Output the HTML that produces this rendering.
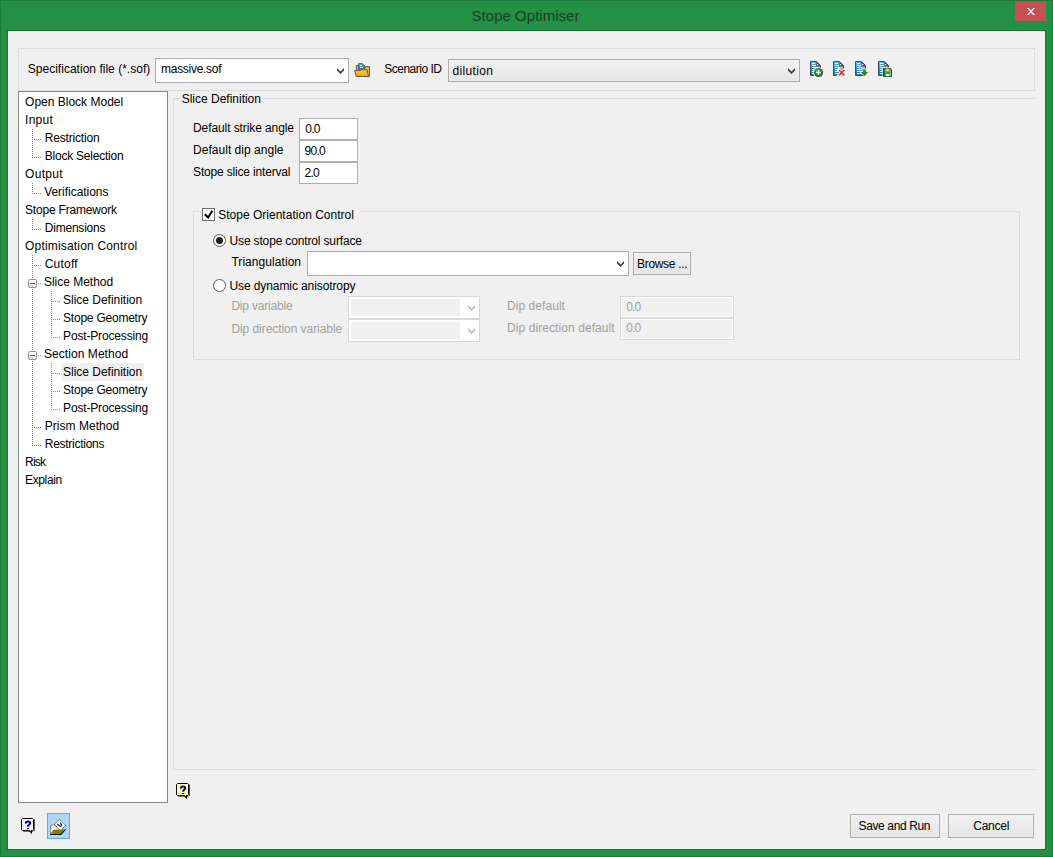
<!DOCTYPE html>
<html><head><meta charset="utf-8"><title>Stope Optimiser</title>
<style>
html,body{margin:0;padding:0;}
body{width:1053px;height:857px;overflow:hidden;position:relative;background:#239044;font-family:"Liberation Sans",sans-serif;font-size:12px;}
div,span,svg{position:absolute;box-sizing:border-box;}
.t{white-space:nowrap;display:block;}
#frame{left:0;top:0;width:1053px;height:857px;border:1px solid #1c7a38;background:#239044;}
#client{left:8px;top:31px;width:1037px;height:818px;background:#f0f0f0;box-shadow:0 0 0 1px #107a30;}
#close{left:1015px;top:1px;width:31px;height:20px;background:#c75050;}
.gb{border:1px solid #dcdcdc;}
.edit{border:1px solid #abadb3;background:#fff;}
.btn{border:1px solid #acacac;background:linear-gradient(#f1f1f1,#e5e5e5);box-shadow:inset 0 0 0 1px rgba(255,255,255,.28);}
.dis{border:1px solid #d9d9d9;background:#fff;}
.dis i{position:absolute;display:block;background:#f0f0f0;}
.hl{background:#f0f0f0;}

</style></head><body>
<div id="frame"></div>
<div id="close"><svg width="31" height="20" viewBox="0 0 31 20" style="left:0;top:0"><path transform="translate(12,7)" d="M0 0 h1.8 l2.2 2.5 l2.2 -2.5 h1.8 l-3.1 3.5 l3.1 3.5 h-1.8 l-2.2 -2.5 l-2.2 2.5 h-1.8 l3.1 -3.5 z" fill="#fff"/></svg></div>
<div id="client"></div>
<!-- top group -->
<div class="gb" style="left:18px;top:48px;width:1017px;height:43px"></div>
<div class="edit" style="left:155px;top:58px;width:194px;height:25px"></div>
<div class="btn" style="left:448px;top:59px;width:352px;height:23px"></div>
<!-- tree -->
<div class="edit" style="left:18px;top:91px;width:150px;height:712px;border-color:#828790"></div>
<div class="hl" style="left:61px;top:363px;width:83px;height:18px"></div>
<!-- right group -->
<div class="gb" style="left:173px;top:98px;width:862px;height:672px;border-right:none"></div>
<div style="left:180px;top:96px;width:83px;height:5px;background:#f0f0f0"></div>
<div class="edit" style="left:299px;top:118px;width:59px;height:22px"></div>
<div class="edit" style="left:299px;top:140px;width:59px;height:22px"></div>
<div class="edit" style="left:299px;top:162px;width:59px;height:22px"></div>
<div class="gb" style="left:193px;top:211px;width:827px;height:149px"></div>
<div style="left:201px;top:209px;width:159px;height:5px;background:#f0f0f0"></div>
<div style="left:202px;top:208px;width:13px;height:13px;border:1px solid #707070;background:#fff"></div>
<svg style="left:202px;top:208px" width="13" height="13" viewBox="0 0 13 13"><path d="M2.8 6.3 L6.1 9.5 L10.4 2.7" stroke="#000" stroke-width="2" fill="none"/></svg>
<div style="left:213px;top:234px;width:13px;height:13px;border:1px solid #5a5a5a;background:#fff;border-radius:50%"></div>
<div style="left:216px;top:237px;width:7px;height:7px;background:#222;border-radius:50%"></div>
<div class="edit" style="left:307px;top:251px;width:322px;height:25px"></div>
<div class="btn" style="left:633px;top:252px;width:58px;height:23px"></div>
<div style="left:213px;top:279px;width:13px;height:13px;border:1px solid #5a5a5a;background:#fff;border-radius:50%"></div>
<div class="dis" style="left:348px;top:296px;width:132px;height:23px"><i style="left:2px;top:2px;width:109px;height:17px"></i></div>
<div class="dis" style="left:348px;top:319px;width:132px;height:23px"><i style="left:2px;top:2px;width:109px;height:17px"></i></div>
<div class="dis" style="left:620px;top:296px;width:114px;height:22px"><i style="left:1px;top:1px;width:110px;height:18px"></i></div>
<div class="dis" style="left:620px;top:318px;width:114px;height:22px"><i style="left:1px;top:1px;width:110px;height:18px"></i></div>
<!-- bottom -->
<div style="left:47px;top:813px;width:23px;height:26px;border:1px solid #66a7e8;background:#b3d5f3"></div>
<div class="btn" style="left:850px;top:814px;width:90px;height:24px"></div>
<div class="btn" style="left:948px;top:814px;width:86px;height:24px"></div>
<svg id="ov" width="1053" height="857" viewBox="0 0 1053 857" style="left:0;top:0">
<defs>
<linearGradient id="gdoc" x1="0" y1="0" x2="0" y2="1"><stop offset="0" stop-color="#6db3df"/><stop offset="1" stop-color="#0f72b2"/></linearGradient>
<linearGradient id="gfold" x1="0" y1="0" x2="0" y2="1"><stop offset="0" stop-color="#ffd91c"/><stop offset="1" stop-color="#ff9619"/></linearGradient>
<linearGradient id="gback" x1="0" y1="0" x2="0" y2="1"><stop offset="0" stop-color="#e9b51c"/><stop offset="1" stop-color="#ffc21d"/></linearGradient>
<radialGradient id="gplus" cx="0.4" cy="0.3" r="0.8"><stop offset="0" stop-color="#4aa84a"/><stop offset="1" stop-color="#0b5a18"/></radialGradient>
<linearGradient id="garr" x1="0" y1="0" x2="0" y2="1"><stop offset="0" stop-color="#3fa03a"/><stop offset="1" stop-color="#126a1c"/></linearGradient>
<linearGradient id="gexp" x1="0" y1="0" x2="0" y2="1"><stop offset="0" stop-color="#ffffff"/><stop offset="1" stop-color="#dcdcdc"/></linearGradient>
<pattern id="dith" width="4" height="2" patternUnits="userSpaceOnUse"><rect width="4" height="2" fill="#fff"/><rect x="2" y="0" width="1" height="1" fill="#ffff00"/><rect x="0" y="1" width="1" height="1" fill="#ffff00"/></pattern><pattern id="dith2" width="2" height="2" patternUnits="userSpaceOnUse"><rect width="2" height="2" fill="#fff"/><rect x="0" y="0" width="1" height="1" fill="#ffff00"/><rect x="1" y="1" width="1" height="1" fill="#ffff00"/></pattern>
<g id="doc">
 <path d="M0.5 0.5 H6.5 L10.5 4.5 V14.5 H0.5 Z" fill="url(#gdoc)" stroke="#4b4b4f" stroke-width="1"/>
 <path d="M6.5 0.5 L10.5 4.5 V5.6 H6.5 Z" fill="#4b4b4f"/>
 <rect x="6.6" y="5.6" width="3.4" height="2.2" fill="#fff" opacity=".42"/>
 <rect x="7" y="3" width="1.2" height="1.2" fill="#fff"/>
 <g fill="#fff"><rect x="2" y="2" width="3" height="1"/><rect x="2" y="4" width="4" height="1"/><rect x="2" y="6" width="5" height="1"/><rect x="2" y="8" width="5" height="1"/><rect x="2" y="10" width="7" height="1"/><rect x="2" y="12" width="6" height="1"/></g>
</g>
<g id="help">
 <path d="M1.5 0.5 H11.5 L12.5 1.5 V11.5 L11.5 12.5 H1.5 L0.5 11.5 V1.5 Z" fill="url(#dith)" stroke="#000" stroke-width="1"/>
 <path d="M13.5 1.5 V12.5 L11 13.3 H2" fill="none" stroke="#555" stroke-width="1"/>
 <path d="M7.5 12.5 H11.5 L10.6 16 Z" fill="#000"/>
 <path d="M8.4 12 H10.2 L9.9 13.4 Z" fill="#ffff00"/>
 <path d="M4.9 5.6 C4.6 2.8 9.4 2.9 9.2 5.2 C9.1 6.6 7.1 7 6.9 8.6" fill="none" stroke="#00008b" stroke-width="2.1"/>
 <rect x="5.9" y="10" width="2.2" height="1.1" fill="#00008b"/>
</g>
</defs>
<g stroke="#8a8a8a" stroke-width="1" stroke-dasharray="1 1" shape-rendering="crispEdges">
<line x1="32.5" y1="129" x2="32.5" y2="158"/>
<line x1="32" y1="139.5" x2="41" y2="139.5"/>
<line x1="32" y1="157.5" x2="41" y2="157.5"/>
<line x1="32.5" y1="183" x2="32.5" y2="194"/>
<line x1="32" y1="193.5" x2="41" y2="193.5"/>
<line x1="32.5" y1="219" x2="32.5" y2="230"/>
<line x1="32" y1="229.5" x2="41" y2="229.5"/>
<line x1="32.5" y1="255" x2="32.5" y2="279"/>
<line x1="32.5" y1="289" x2="32.5" y2="351"/>
<line x1="32.5" y1="361" x2="32.5" y2="446"/>
<line x1="32" y1="265.5" x2="41" y2="265.5"/>
<line x1="38" y1="283.5" x2="41" y2="283.5"/>
<line x1="38" y1="355.5" x2="41" y2="355.5"/>
<line x1="32" y1="427.5" x2="41" y2="427.5"/>
<line x1="32" y1="445.5" x2="41" y2="445.5"/>
<line x1="51.5" y1="291" x2="51.5" y2="338"/>
<line x1="51" y1="301.5" x2="60" y2="301.5"/>
<line x1="51" y1="319.5" x2="60" y2="319.5"/>
<line x1="51" y1="337.5" x2="60" y2="337.5"/>
<line x1="51.5" y1="363" x2="51.5" y2="410"/>
<line x1="51" y1="373.5" x2="60" y2="373.5"/>
<line x1="51" y1="391.5" x2="60" y2="391.5"/>
<line x1="51" y1="409.5" x2="60" y2="409.5"/>
</g>
<rect x="28.5" y="279.5" width="8" height="8" rx="1.2" fill="url(#gexp)" stroke="#919191"/>
<rect x="30" y="283" width="5" height="1" fill="#4b63a7"/>
<rect x="28.5" y="351.5" width="8" height="8" rx="1.2" fill="url(#gexp)" stroke="#919191"/>
<rect x="30" y="355" width="5" height="1" fill="#4b63a7"/>
<path transform="translate(337,68)" d="M0 0 L3.5 3.5 L7 0 V2.6 L3.5 6.1 L0 2.6 Z" fill="#404040"/>
<path transform="translate(788,68)" d="M0 0 L3.5 3.5 L7 0 V2.6 L3.5 6.1 L0 2.6 Z" fill="#404040"/>
<path transform="translate(617,261)" d="M0 0 L3.5 3.5 L7 0 V2.6 L3.5 6.1 L0 2.6 Z" fill="#404040"/>
<path transform="translate(468,305)" d="M0 0 L3.5 3.5 L7 0 V2.6 L3.5 6.1 L0 2.6 Z" fill="#bcbcbc"/>
<path transform="translate(468,328)" d="M0 0 L3.5 3.5 L7 0 V2.6 L3.5 6.1 L0 2.6 Z" fill="#bcbcbc"/>
<use href="#doc" x="810" y="61"/>
<use href="#doc" x="833" y="61"/>
<use href="#doc" x="855" y="61"/>
<use href="#doc" x="878" y="61"/>
<circle cx="818.5" cy="72.5" r="5.3" fill="#f4f4f4"/>
<circle cx="818.5" cy="72.5" r="4.6" fill="url(#gplus)"/>
<path d="M816 72.5 H821 M818.5 70 V75" stroke="#fff" stroke-width="1.5"/>
<path d="M839 70 L844.4 75.4 M844.4 70 L839 75.4" stroke="#f6f6f6" stroke-width="3.6" stroke-linecap="square"/>
<path d="M839 70 L844.4 75.4 M844.4 70 L839 75.4" stroke="#d8382c" stroke-width="1.7"/>
<path d="M863 69.2 H866 V72 H868.2 L864.5 76 L860.8 72 H863 Z" fill="url(#garr)" stroke="#f4f4f4" stroke-width="1.2" paint-order="stroke"/>
<path d="M883 68 H890.6 L892 69.4 V77 H883 Z" fill="#44a03a" stroke="#f4f4f4" stroke-width="1" paint-order="stroke"/>
<path d="M883.5 68.5 H890.4 L891.5 69.6 V76.5 H883.5 Z" fill="none" stroke="#0e5f15" stroke-width="1"/>
<rect x="884" y="69" width="1" height="7.5" fill="#2d8a2a"/>
<rect x="890" y="70" width="1" height="6.5" fill="#7acb66"/>
<rect x="885.5" y="68.6" width="4" height="3" fill="#c9c9cc" stroke="#777" stroke-width=".5"/>
<rect x="886" y="74" width="3.4" height="2.2" fill="#fff"/>
<g transform="translate(354,62)">
<path d="M2.3 3.4 H4.4 V8.6 H2.3 Z M9.6 4.6 H15.5 V14.6 H13.5 V8.4 H9.6 Z" fill="url(#gback)" stroke="#5b5e66" stroke-width="1"/>
<path d="M4.7 1.6 H8.3 L10.7 4 V8.5 H4.7 Z" fill="url(#gdoc)" stroke="#55595f" stroke-width="1"/>
<rect x="6" y="3" width="2" height="1" fill="#fff"/><rect x="6" y="5" width="3" height="1" fill="#fff"/>
<path d="M0.6 8.6 H6.6 L7.6 7.8 H12.9 L14.6 14.5 H2.3 Z" fill="url(#gfold)" stroke="#5b5e66" stroke-width="1" stroke-linejoin="round"/>
</g>
<use href="#help" x="21" y="818"/>
<use href="#help" x="176" y="783"/>
<g transform="translate(50,819)">
<path d="M0.5 6.3 H3.4 L7.6 10 L3.2 11.3 L0.5 15 Z" fill="url(#dith2)"/>
<path d="M0.5 15 V6.6 L1 6.1 H3" fill="none" stroke="#8c8c8c" stroke-width="1"/>
<path d="M3.2 11 L15.3 10.3 L10.8 15 H0.6 Z" fill="#808000"/>
<path d="M0.2 15.5 H10.9 L15.6 10.4" fill="none" stroke="#000" stroke-width="1.1"/>
<path d="M9.5 0.3 L15.6 6.3 L12 10 H8 L4.3 5.4 Z" fill="#fff"/>
<path d="M4.3 5.4 L9.5 0.3 L15.6 6.3" fill="none" stroke="#7a7a7a" stroke-width=".8"/>
<path d="M4.3 5.4 L8.2 9.6 M15.6 6.3 L12.2 9.7" fill="none" stroke="#000" stroke-width="1" stroke-dasharray="1.4 .7"/>
<path d="M7.2 5.4 C8.6 5.2 9.2 7.4 10.6 7.3 C12 7.2 11.3 4.6 10.4 3.6" fill="none" stroke="#0000c8" stroke-width="1.3"/>
</g>
</svg>
<span class="t" style="left:471.60px;top:6.80px;font-size:15px;line-height:17px;letter-spacing:0.025px;color:#1d3c28">Stope Optimiser</span>
<span class="t" style="left:27.72px;top:61.84px;font-size:12px;line-height:14px;letter-spacing:0.021px;color:#000">Specification file (*.sof)</span>
<span class="t" style="left:161.06px;top:61.84px;font-size:12px;line-height:14px;letter-spacing:-0.290px;color:#000">massive.sof</span>
<span class="t" style="left:384.18px;top:61.84px;font-size:12px;line-height:14px;letter-spacing:-0.491px;color:#000">Scenario ID</span>
<span class="t" style="left:452.52px;top:63.84px;font-size:12px;line-height:14px;letter-spacing:0.344px;color:#000">dilution</span>
<span class="t" style="left:25.06px;top:94.84px;font-size:12px;line-height:14px;letter-spacing:0.004px;color:#000">Open Block Model</span>
<span class="t" style="left:25.06px;top:112.84px;font-size:12px;line-height:14px;letter-spacing:0.271px;color:#000">Input</span>
<span class="t" style="left:44.74px;top:130.84px;font-size:12px;line-height:14px;letter-spacing:-0.181px;color:#000">Restriction</span>
<span class="t" style="left:44.74px;top:148.84px;font-size:12px;line-height:14px;letter-spacing:-0.226px;color:#000">Block Selection</span>
<span class="t" style="left:25.06px;top:166.84px;font-size:12px;line-height:14px;letter-spacing:0.310px;color:#000">Output</span>
<span class="t" style="left:44.18px;top:184.84px;font-size:12px;line-height:14px;letter-spacing:-0.032px;color:#000">Verifications</span>
<span class="t" style="left:25.06px;top:202.84px;font-size:12px;line-height:14px;letter-spacing:-0.190px;color:#000">Stope Framework</span>
<span class="t" style="left:44.74px;top:220.84px;font-size:12px;line-height:14px;letter-spacing:-0.214px;color:#000">Dimensions</span>
<span class="t" style="left:25.06px;top:238.84px;font-size:12px;line-height:14px;letter-spacing:0.179px;color:#000">Optimisation Control</span>
<span class="t" style="left:44.74px;top:256.84px;font-size:12px;line-height:14px;letter-spacing:0.219px;color:#000">Cutoff</span>
<span class="t" style="left:43.94px;top:274.84px;font-size:12px;line-height:14px;letter-spacing:-0.012px;color:#000">Slice Method</span>
<span class="t" style="left:63.06px;top:292.84px;font-size:12px;line-height:14px;letter-spacing:-0.017px;color:#000">Slice Definition</span>
<span class="t" style="left:63.06px;top:310.84px;font-size:12px;line-height:14px;letter-spacing:-0.226px;color:#000">Stope Geometry</span>
<span class="t" style="left:63.06px;top:328.84px;font-size:12px;line-height:14px;letter-spacing:-0.161px;color:#000">Post-Processing</span>
<span class="t" style="left:43.94px;top:346.84px;font-size:12px;line-height:14px;letter-spacing:0.065px;color:#000">Section Method</span>
<span class="t" style="left:63.06px;top:364.84px;font-size:12px;line-height:14px;letter-spacing:-0.017px;color:#000">Slice Definition</span>
<span class="t" style="left:63.06px;top:382.84px;font-size:12px;line-height:14px;letter-spacing:-0.226px;color:#000">Stope Geometry</span>
<span class="t" style="left:63.06px;top:400.84px;font-size:12px;line-height:14px;letter-spacing:-0.161px;color:#000">Post-Processing</span>
<span class="t" style="left:44.74px;top:418.84px;font-size:12px;line-height:14px;letter-spacing:0.037px;color:#000">Prism Method</span>
<span class="t" style="left:44.74px;top:436.84px;font-size:12px;line-height:14px;letter-spacing:-0.266px;color:#000">Restrictions</span>
<span class="t" style="left:25.06px;top:454.84px;font-size:12px;line-height:14px;letter-spacing:-0.800px;color:#000">Risk</span>
<span class="t" style="left:25.06px;top:472.84px;font-size:12px;line-height:14px;letter-spacing:-0.374px;color:#000">Explain</span>
<span class="t" style="left:181.72px;top:91.84px;font-size:12px;line-height:14px;letter-spacing:-0.009px;color:#000">Slice Definition</span>
<span class="t" style="left:193.06px;top:120.84px;font-size:12px;line-height:14px;letter-spacing:-0.095px;color:#000">Default strike angle</span>
<span class="t" style="left:193.06px;top:142.84px;font-size:12px;line-height:14px;letter-spacing:0.026px;color:#000">Default dip angle</span>
<span class="t" style="left:193.06px;top:164.84px;font-size:12px;line-height:14px;letter-spacing:-0.173px;color:#000">Stope slice interval</span>
<span class="t" style="left:305.30px;top:121.84px;font-size:12px;line-height:14px;letter-spacing:-0.800px;color:#000">0.0</span>
<span class="t" style="left:304.50px;top:143.84px;font-size:12px;line-height:14px;letter-spacing:-0.700px;color:#000">90.0</span>
<span class="t" style="left:304.50px;top:165.84px;font-size:12px;line-height:14px;letter-spacing:-0.700px;color:#000">2.0</span>
<span class="t" style="left:218.18px;top:207.84px;font-size:12px;line-height:14px;letter-spacing:0.015px;color:#000">Stope Orientation Control</span>
<span class="t" style="left:229.52px;top:233.84px;font-size:12px;line-height:14px;letter-spacing:-0.151px;color:#000">Use stope control surface</span>
<span class="t" style="left:231.40px;top:254.84px;font-size:12px;line-height:14px;letter-spacing:0.060px;color:#000">Triangulation</span>
<span class="t" style="left:637.06px;top:256.84px;font-size:12px;line-height:14px;letter-spacing:-0.320px;color:#000">Browse ...</span>
<span class="t" style="left:229.52px;top:278.84px;font-size:12px;line-height:14px;letter-spacing:-0.099px;color:#000">Use dynamic anisotropy</span>
<span class="t" style="left:231.40px;top:298.84px;font-size:12px;line-height:14px;letter-spacing:-0.183px;color:#a0a0a0">Dip variable</span>
<span class="t" style="left:231.40px;top:321.84px;font-size:12px;line-height:14px;letter-spacing:-0.060px;color:#a0a0a0">Dip direction variable</span>
<span class="t" style="left:507.06px;top:298.84px;font-size:12px;line-height:14px;letter-spacing:0.054px;color:#a0a0a0">Dip default</span>
<span class="t" style="left:507.06px;top:320.84px;font-size:12px;line-height:14px;letter-spacing:0.076px;color:#a0a0a0">Dip direction default</span>
<span class="t" style="left:626.18px;top:299.84px;font-size:12px;line-height:14px;letter-spacing:-0.800px;color:#a0a0a0">0.0</span>
<span class="t" style="left:626.18px;top:321.34px;font-size:12px;line-height:14px;letter-spacing:-0.800px;color:#a0a0a0">0.0</span>
<span class="t" style="left:858.50px;top:818.84px;font-size:12px;line-height:14px;letter-spacing:-0.367px;color:#000">Save and Run</span>
<span class="t" style="left:973.18px;top:818.84px;font-size:12px;line-height:14px;letter-spacing:-0.206px;color:#000">Cancel</span>
</body></html>
